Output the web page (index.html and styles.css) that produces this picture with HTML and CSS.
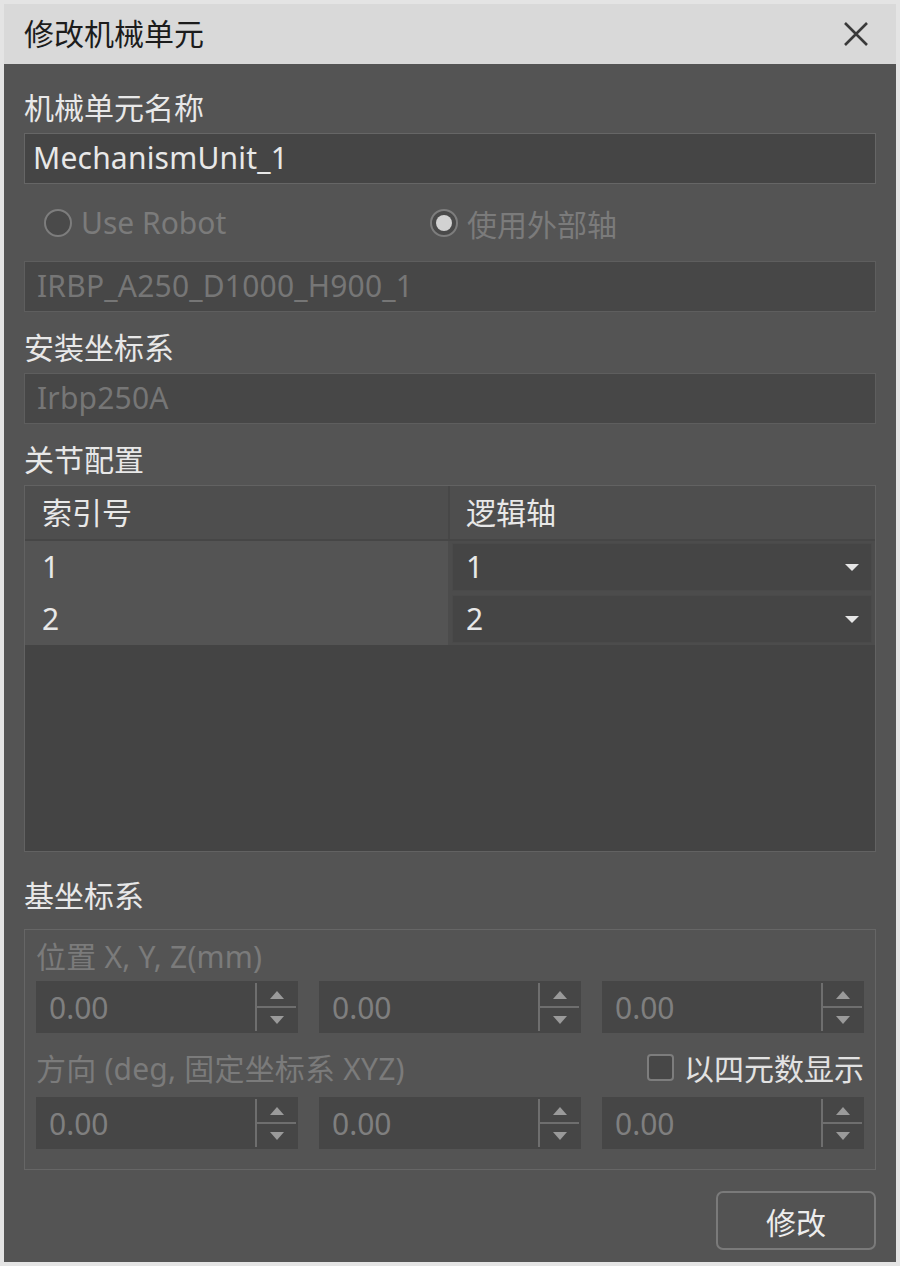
FILE: index.html
```html
<!DOCTYPE html>
<html lang="zh-CN">
<head>
    <meta charset="UTF-8">
    <meta name="viewport" content="width=device-width, initial-scale=1.0">
    <title>修改机械单元</title>
    <link rel="stylesheet" href="styles.css">
</head>
<body>
    <div class="window">
        <div class="titlebar">
            <span class="title">修改机械单元</span>
            <svg class="close" width="26" height="26" viewBox="0 0 26 26">
                <path d="M2 2 L24 24 M24 2 L2 24" stroke="#3a3a3a" stroke-width="2.6" fill="none"/>
            </svg>
        </div>
        <div class="content">
            <div class="label first">机械单元名称</div>
            <div class="field">MechanismUnit_1</div>

            <div class="radio-row">
                <label class="radio"><span class="radio-mark"></span>Use Robot</label>
                <label class="radio checked"><span class="radio-mark"></span>使用外部轴</label>
            </div>
            <div class="field disabled">IRBP_A250_D1000_H900_1</div>

            <div class="label">安装坐标系</div>
            <div class="field disabled">Irbp250A</div>

            <div class="label">关节配置</div>
            <div class="table">
                <div class="table-head">
                    <div class="th">索引号</div>
                    <div class="th">逻辑轴</div>
                </div>
                <div class="tr">
                    <div class="td">1</div>
                    <div class="td combo-cell"><div class="combo">1<span class="caret"></span></div></div>
                </div>
                <div class="tr">
                    <div class="td">2</div>
                    <div class="td combo-cell"><div class="combo">2<span class="caret"></span></div></div>
                </div>
            </div>

            <div class="label base">基坐标系</div>
            <div class="group">
                <div class="group-label top">位置 X, Y, Z(mm)</div>
                <div class="spin-row">
                    <div class="spin"><span class="spin-value">0.00</span><span class="spin-buttons"><i class="up"></i><i class="down"></i></span></div>
                    <div class="spin"><span class="spin-value">0.00</span><span class="spin-buttons"><i class="up"></i><i class="down"></i></span></div>
                    <div class="spin"><span class="spin-value">0.00</span><span class="spin-buttons"><i class="up"></i><i class="down"></i></span></div>
                </div>
                <div class="group-label middle">
                    <span>方向 (deg, 固定坐标系 XYZ)</span>
                    <label class="check"><span class="check-box"></span>以四元数显示</label>
                </div>
                <div class="spin-row">
                    <div class="spin"><span class="spin-value">0.00</span><span class="spin-buttons"><i class="up"></i><i class="down"></i></span></div>
                    <div class="spin"><span class="spin-value">0.00</span><span class="spin-buttons"><i class="up"></i><i class="down"></i></span></div>
                    <div class="spin"><span class="spin-value">0.00</span><span class="spin-buttons"><i class="up"></i><i class="down"></i></span></div>
                </div>
            </div>

            <div class="actions">
                <button class="btn">修改</button>
            </div>
        </div>
    </div>
</body>
</html>
```

FILE: styles.css
```css
body {
    margin: 0;
    background-color: #e4e4e4;
    font-family: 'Noto Sans', 'Noto Sans CJK SC', sans-serif;
    font-size: 30px;
    color: #e8e8e8;
}
.window {
    margin: 4px;
    width: 892px;
    height: 1258px;
    background-color: #545454;
    display: flex;
    flex-direction: column;
}
.titlebar {
    height: 60px;
    flex-shrink: 0;
    background-color: #d9d9d9;
    display: flex;
    align-items: center;
    justify-content: space-between;
    padding: 0 27px 0 20px;
}
.title {
    color: #1c1c1c;
    line-height: 1;
}
.close { display: block; }
.content {
    padding: 26px 20px 0 20px;
    display: flex;
    flex-direction: column;
}
.label {
    height: 36px;
    line-height: 36px;
    margin: 18px 0 7px 0;
    white-space: nowrap;
}
.label.first { margin-top: 0; }
.label.base { margin: 26px 0 15px 0; }
.field {
    height: 49px;
    line-height: 47px;
    border: 1px solid #666;
    background-color: #454545;
    padding: 0 8px;
    white-space: nowrap;
    letter-spacing: 0.2px;
}
.field.disabled {
    color: #767676;
    border-color: #5e5e5e;
    background-color: #474747;
    padding-left: 12px;
}
.radio-row {
    height: 77px;
    display: grid;
    grid-template-columns: 386px 1fr;
    align-items: center;
    padding-left: 20px;
    color: #7b7b7b;
}
.radio {
    display: flex;
    align-items: center;
    gap: 9px;
}
.radio-mark {
    width: 24px;
    height: 24px;
    border: 2px solid #7d7d7d;
    border-radius: 50%;
    background-color: #4a4a4a;
    position: relative;
}
.radio.checked .radio-mark::after {
    content: '';
    position: absolute;
    left: 4px;
    top: 4px;
    width: 16px;
    height: 16px;
    border-radius: 50%;
    background-color: #d2d2d2;
}

/* joint table */
.table {
    height: 365px;
    border: 1px solid #626262;
    background-color: #444;
}
.table-head {
    display: grid;
    grid-template-columns: 425px 1fr;
    height: 53px;
    background-color: #4e4e4e;
    border-bottom: 2px solid #464646;
}
.th {
    padding-left: 17px;
    line-height: 53px;
}
.th:first-child { border-right: 2px solid #474747; }
.th:last-child { padding-left: 16px; }
.tr {
    display: grid;
    grid-template-columns: 423px 1fr;
    height: 52px;
}
.td {
    padding-left: 17px;
    line-height: 52px;
    background-color: #545454;
}
.td.combo-cell {
    padding: 2px 3px 2px 4px;
    background-color: #4c4c4c;
}
.combo {
    height: 46px;
    line-height: 46px;
    border: 1px solid #4a4a4a;
    background-color: #454545;
    padding: 0 12px 0 13px;
    display: flex;
    align-items: center;
    justify-content: space-between;
}
.caret {
    width: 0;
    height: 0;
    border-left: 7px solid transparent;
    border-right: 7px solid transparent;
    border-top: 7px solid #e6e6e6;
}

/* base frame group */
.group {
    border: 1px solid #666;
    padding: 4px 11px 20px 11px;
    color: #7b7b7b;
}
.group-label {
    white-space: nowrap;
    letter-spacing: 0.2px;
}
.group-label.top {
    height: 47px;
    line-height: 45px;
}
.group-label.middle {
    height: 64px;
    display: flex;
    align-items: center;
    justify-content: space-between;
    padding-top: 4px;
    box-sizing: border-box;
}
.check {
    display: flex;
    align-items: center;
    gap: 10px;
    color: #e2e2e2;
    letter-spacing: 0;
}
.check-box {
    width: 23px;
    height: 23px;
    border: 2px solid #7d7d7d;
    border-radius: 4px;
    background-color: #474747;
}
.spin-row {
    display: grid;
    grid-template-columns: repeat(3, 1fr);
    gap: 21px;
}
.spin {
    height: 52px;
    background-color: #464646;
    display: flex;
    align-items: center;
    justify-content: space-between;
}
.spin-value {
    padding-left: 13px;
    color: #7f7f7f;
}
.spin-buttons {
    width: 39px;
    height: 48px;
    margin-right: 2px;
    border-left: 2px solid #6e6e6e;
    display: flex;
    flex-direction: column;
}
.spin-buttons i {
    flex: 1;
    display: flex;
    align-items: center;
    justify-content: center;
}
.spin-buttons .up { border-bottom: 2px solid #6e6e6e; }
.spin-buttons .up::after {
    content: '';
    border-left: 7px solid transparent;
    border-right: 7px solid transparent;
    border-bottom: 8px solid #9a9a9a;
}
.spin-buttons .down::after {
    content: '';
    border-left: 7px solid transparent;
    border-right: 7px solid transparent;
    border-top: 8px solid #9a9a9a;
}
.actions {
    display: flex;
    justify-content: flex-end;
    margin-top: 21px;
}
.btn {
    width: 160px;
    height: 59px;
    font-family: inherit;
    font-size: 30px;
    color: #ececec;
    background-color: #535353;
    border: 2px solid #7a7a7a;
    border-radius: 7px;
    padding: 0;
}
```
